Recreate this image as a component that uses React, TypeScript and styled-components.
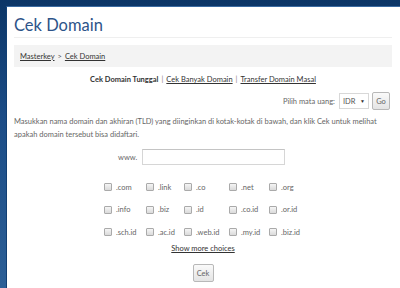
import React from "react";
import styled, { createGlobalStyle } from "styled-components";

const Global = createGlobalStyle`
  html, body { margin: 0; padding: 0; }
  body {
    width: 400px;
    height: 288px;
    overflow: hidden;
    background: linear-gradient(180deg, #0b3566 0%, #1b4c86 40%, #2c5f96 100%);
    font-family: Lato, "Open Sans", sans-serif;
    color: #555;
  }
`;

const Frame = styled.div`
  padding: 6px 0 0 6px;
  height: 288px;
  box-sizing: border-box;
`;

const Panel = styled.div`
  background: #fff;
  height: 100%;
  border-left: 1px solid #123f73;
  border-top: 1px solid #3a6aa0;
  padding: 0 8px 0 7px;
  box-sizing: border-box;
`;

const Title = styled.h1`
  margin: 0;
  padding: 10px 0 4px 0;
  font-family: Lato, sans-serif;
  font-weight: 400;
  font-size: 16.5px;
  line-height: 16px;
  color: #2d5489;
  border-bottom: 1px solid #efefef;
`;

const Crumbs = styled.div`
  margin-top: 7px;
  background: #f3f3f3;
  height: 22px;
  display: flex;
  align-items: center;
  padding-left: 6px;
  font-size: 7.5px;
  color: #555;
  gap: 3px;
`;

const Link = styled.a`
  color: #333;
  text-decoration: underline;
  cursor: pointer;
`;

const Tabs = styled.div`
  margin-top: 8px;
  text-align: center;
  font-size: 7.5px;
  color: #333;
`;

const Strong = styled.span`
  font-weight: 700;
  color: #333;
`;

const Sep = styled.span`
  color: #888;
  margin: 0 3px;
`;

const CurrencyRow = styled.div`
  margin-top: 8px;
  display: flex;
  justify-content: flex-end;
  align-items: center;
  gap: 3px;
  padding-right: 2px;
  font-size: 7.5px;
  color: #666;
`;

const Label = styled.span`
  margin-right: 1px;
`;

const Select = styled.div`
  width: 30px;
  height: 16px;
  border: 1px solid #d8d8d8;
  box-sizing: border-box;
  display: flex;
  align-items: center;
  justify-content: space-between;
  padding: 0 3px;
  font-size: 7.5px;
  color: #555;
  background: #fff;
`;

const Caret = styled.span`
  font-size: 5px;
  color: #333;
`;

const Button = styled.button<{ w?: number }>`
  font-family: Lato, sans-serif;
  height: 18px;
  width: ${(p) => p.w ?? 18}px;
  padding: 0;
  font-size: 7.5px;
  color: #666;
  border: 1px solid #b8b8b8;
  border-radius: 2px;
  background: linear-gradient(180deg, #fafafa 0%, #e4e4e4 100%);
  box-sizing: border-box;
`;

const Intro = styled.p`
  margin: 5px 0 0 0;
  font-size: 7.5px;
  line-height: 13px;
  color: #666;
`;

const WwwRow = styled.div`
  margin-top: 8px;
  display: flex;
  align-items: center;
  padding-left: 104px;
  gap: 5px;
  font-size: 7.5px;
  color: #666;
`;

const TextInput = styled.div`
  width: 143px;
  height: 16px;
  border: 1px solid #d6d6d6;
  border-top-color: #c4c4c4;
  box-sizing: border-box;
  background: #fff;
`;

const TldGrid = styled.div`
  margin-top: 17px;
  margin-left: 90px;
  display: grid;
  grid-template-columns: 42px 38px 45px 40px auto;
  row-gap: 12.5px;
  font-size: 7.5px;
  color: #666;
`;

const Tld = styled.label`
  display: flex;
  align-items: center;
  gap: 4px;
  height: 10px;
`;

const Box = styled.span`
  width: 6px;
  height: 6px;
  border: 1px solid #aaa;
  border-radius: 1px;
  background: linear-gradient(180deg, #f5f5f5, #dadada);
  display: inline-block;
`;

const More = styled.div`
  margin-top: 7px;
  text-align: center;
  font-size: 7.5px;
`;

const Submit = styled.div`
  margin-top: 11px;
  display: flex;
  justify-content: center;
`;

const tlds = [
  ".com", ".link", ".co", ".net", ".org",
  ".info", ".biz", ".id", ".co.id", ".or.id",
  ".sch.id", ".ac.id", ".web.id", ".my.id", ".biz.id",
];

export default function App() {
  return (
    <>
      <Global />
      <Frame>
        <Panel>
          <Title>Cek Domain</Title>
          <Crumbs>
            <Link>Masterkey</Link>
            <span>&gt;</span>
            <Link>Cek Domain</Link>
          </Crumbs>
          <Tabs>
            <Strong>Cek Domain Tunggal</Strong>
            <Sep>|</Sep>
            <Link>Cek Banyak Domain</Link>
            <Sep>|</Sep>
            <Link>Transfer Domain Masal</Link>
          </Tabs>
          <CurrencyRow>
            <Label>Pilih mata uang:</Label>
            <Select>
              <span>IDR</span>
              <Caret>▼</Caret>
            </Select>
            <Button>Go</Button>
          </CurrencyRow>
          <Intro>
            Masukkan nama domain dan akhiran (TLD) yang diinginkan di kotak-kotak di bawah, dan klik Cek untuk melihat apakah domain tersebut bisa didaftari.
          </Intro>
          <WwwRow>
            <span>www.</span>
            <TextInput />
          </WwwRow>
          <TldGrid>
            {tlds.map((t) => (
              <Tld key={t}>
                <Box />
                <span>{t}</span>
              </Tld>
            ))}
          </TldGrid>
          <More>
            <Link>Show more choices</Link>
          </More>
          <Submit>
            <Button w={21}>Cek</Button>
          </Submit>
        </Panel>
      </Frame>
    </>
  );
}
